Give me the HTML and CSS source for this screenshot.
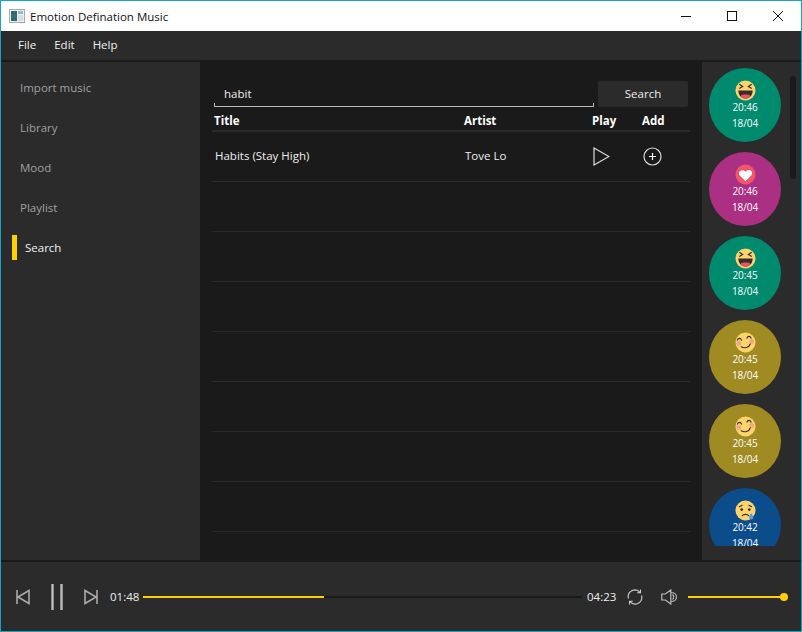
FILE: index.html
```html
<!DOCTYPE html>
<html>

	<head>
		<meta charset="utf-8" />
		<title>Emotion Defination Music</title>
		<link rel="stylesheet" href="styles.css">
	</head>

	<body>
		<svg class="defs" width="0" height="0">
			<symbol id="laugh" viewBox="0 0 22 22">
				<circle cx="11" cy="11" r="10.5" fill="#fbd56b" />
				<path d="M3.500 11h15c0 5-3.300 8.500-7.500 8.500S3.500 16 3.500 11z" fill="#3d2b2b" />
				<path d="M6 16.500c1.300-1.800 8.700-1.800 10 0-1.300 2-3 3-5 3s-3.700-1-5-3z" fill="#f2506a" />
				<path d="M4.500 4.500l3.500 2.300-3.500 2.200M17.500 4.500l-3.500 2.300 3.500 2.200" fill="none" stroke="#3d2b2b" stroke-width="1.300" />
			</symbol>
			<symbol id="love" viewBox="0 0 22 22">
				<circle cx="11" cy="11" r="10.500" fill="#f2546b" />
				<path d="M11 18l-6-6c-3-3.500 2.500-8 6-4 3.500-4 9-.5 6 4z" fill="#fff" />
			</symbol>
			<symbol id="smile" viewBox="0 0 22 22">
				<circle cx="11" cy="11" r="10.500" fill="#fbd56b" />
				<circle cx="4" cy="12" r="2.600" fill="#f2a58c" />
				<circle cx="17.500" cy="10" r="2.600" fill="#f2a58c" />
				<path d="M2.500 8.500c.8-2.500 3.500-2.500 4.300 0M12.500 6.500c.8-2.500 3.500-2.500 4.300 0M6.500 15.500c3.500 2 8 1 9.500-3" fill="none" stroke="#3d2b2b" stroke-width="1.200" stroke-linecap="round" />
			</symbol>
			<symbol id="sad" viewBox="0 0 22 22">
				<circle cx="11" cy="11" r="10.500" fill="#fbd56b" />
				<circle cx="7" cy="10" r="1.400" fill="#3d2b2b" />
				<circle cx="15" cy="10" r="1.400" fill="#3d2b2b" />
				<path d="M4.500 7l3-1.500M17.500 7l-3-1.500M7.500 16.500c1.500-2 5.500-2 7 0" fill="none" stroke="#3d2b2b" stroke-width="1.200" stroke-linecap="round" />
				<path d="M17 13.500c1.200 2 2.200 3.300 2.200 4.800a2.200 2.200 0 0 1-4.400 0c0-1.500 1-2.800 2.200-4.800z" fill="#5a9be8" />
			</symbol>
		</svg>

		<div class="window">
			<header class="titlebar">
				<svg class="appicon" width="16" height="14" viewBox="0 0 16 14">
					<rect x=".5" y=".5" width="15" height="13" fill="#eee" stroke="#aaa" />
					<rect x="2" y="2" width="6" height="10" fill="#2f6b73" />
					<rect x="9" y="2" width="5" height="3" fill="#9bb8c4" />
					<rect x="9" y="6" width="5" height="6" fill="#d8dde0" />
				</svg>
				<span class="apptitle">Emotion Defination Music</span>
				<div class="winbtns">
					<svg width="46" height="30" viewBox="0 0 46 30"><path d="M18 15.500h10" stroke="#111" /></svg>
					<svg width="46" height="30" viewBox="0 0 46 30"><rect x="18.500" y="10.500" width="9" height="9" fill="none" stroke="#111" /></svg>
					<svg width="46" height="30" viewBox="0 0 46 30"><path d="M18 10l10 10M28 10l-10 10" stroke="#111" /></svg>
				</div>
			</header>

			<nav class="menubar">
				<span>File</span>
				<span>Edit</span>
				<span>Help</span>
			</nav>

			<div class="content">
				<aside class="sidebar">
					<div class="navitem">Import music</div>
					<div class="navitem">Library</div>
					<div class="navitem">Mood</div>
					<div class="navitem">Playlist</div>
					<div class="navitem active">Search</div>
				</aside>

				<main class="main">
					<div class="searchrow">
						<div class="searchbox">habit</div>
						<div class="searchbtn">Search</div>
					</div>
					<div class="row head">
						<div class="c-title">Title</div>
						<div class="c-artist">Artist</div>
						<div class="c-play">Play</div>
						<div class="c-add">Add</div>
					</div>
					<div class="row song">
						<div class="c-title">Habits (Stay High)</div>
						<div class="c-artist">Tove Lo</div>
						<div class="c-play">
							<svg width="17" height="19" viewBox="0 0 17 19"><path d="M1 1v17l15-8.500z" fill="none" stroke="#ddd" stroke-width="1.200" /></svg>
						</div>
						<div class="c-add">
							<svg width="19" height="19" viewBox="0 0 19 19"><circle cx="9.500" cy="9.500" r="8.500" fill="none" stroke="#ddd" stroke-width="1.200" /><path d="M6 9.500h7M9.500 6v7" stroke="#fff" stroke-width="1.200" /></svg>
						</div>
					</div>
					<div class="row"></div>
					<div class="row"></div>
					<div class="row"></div>
					<div class="row"></div>
					<div class="row"></div>
					<div class="row"></div>
					<div class="row"></div>
				</main>

				<aside class="moods">
					<div class="mood green">
						<svg width="21" height="21"><use href="#laugh" /></svg>
						<span>20:46</span>
						<span>18/04</span>
					</div>
					<div class="mood pink">
						<svg width="21" height="21"><use href="#love" /></svg>
						<span>20:46</span>
						<span>18/04</span>
					</div>
					<div class="mood green">
						<svg width="21" height="21"><use href="#laugh" /></svg>
						<span>20:45</span>
						<span>18/04</span>
					</div>
					<div class="mood gold">
						<svg width="21" height="21"><use href="#smile" /></svg>
						<span>20:45</span>
						<span>18/04</span>
					</div>
					<div class="mood gold">
						<svg width="21" height="21"><use href="#smile" /></svg>
						<span>20:45</span>
						<span>18/04</span>
					</div>
					<div class="mood blue">
						<svg width="21" height="21"><use href="#sad" /></svg>
						<span>20:42</span>
						<span>18/04</span>
					</div>
					<div class="scrollthumb"></div>
				</aside>
			</div>

			<footer class="player">
				<svg class="ic-prev" width="14" height="16" viewBox="0 0 14 16"><path d="M1 1v14M13 1.500v13L2 8z" fill="none" stroke="#aaa" stroke-width="1.600" /></svg>
				<svg class="ic-pause" width="12" height="26" viewBox="0 0 12 26"><path d="M1.500 0v26M10.500 0v26" stroke="#bbb" stroke-width="2.400" /></svg>
				<svg class="ic-next" width="14" height="16" viewBox="0 0 14 16"><path d="M13 1v14M1 1.500v13L12 8z" fill="none" stroke="#aaa" stroke-width="1.600" /></svg>
				<span class="time t-now">01:48</span>
				<div class="track seek"><div class="fill" style="width: 41.2%"></div></div>
				<span class="time t-end">04:23</span>
				<svg class="ic-repeat" width="16" height="16" viewBox="0 0 16 16"><path d="M1.500 9.500A6.700 6.700 0 0 1 13 3.300M14.500 6.500A6.700 6.700 0 0 1 3 12.700M13.500 .5v3.300h-3.300M2.500 15.500v-3.300h3.300" fill="none" stroke="#ccc" stroke-width="1.100" /></svg>
				<svg class="ic-sound" width="17" height="16" viewBox="0 0 17 16"><path d="M.8 5v6h3.500l5.500 4V1L4.300 5zM9.800 3.500c3.500 0 5.700 2 5.700 4.500s-2.200 4.500-5.700 4.500M11.500 5.500c1.500 1.300 1.500 3.700 0 5" fill="none" stroke="#bbb" stroke-width="1.200" /></svg>
				<div class="track volume"><div class="fill full"><i class="thumb"></i></div></div>
			</footer>
		</div>
	</body>

</html>
```

FILE: styles.css
```css
* {
	box-sizing: border-box;
}

body {
	margin: 0;
	font-family: "Open Sans", "Noto Sans", sans-serif;
	font-size: 11.5px;
	color: #eee;
}

.defs {
	position: absolute;
}

.window {
	width: 802px;
	height: 632px;
	display: flex;
	flex-direction: column;
	border: 1px solid #17a3c7;
	background: #1a1a1a;
}

.titlebar {
	height: 30px;
	flex: none;
	display: flex;
	align-items: center;
	padding-left: 8px;
	background: #fff;
	color: #111;
}

.apptitle {
	margin-left: 5px;
}

.winbtns {
	margin-left: auto;
	display: flex;
}

.menubar {
	height: 29px;
	flex: none;
	display: flex;
	align-items: center;
	gap: 18px;
	padding: 0 0 3px 17px;
	background: #2b2b2b;
	color: #f0f0f0;
}

.content {
	flex: 1;
	min-height: 0;
	display: flex;
	margin: 2px 0;
}

.sidebar {
	width: 199px;
	flex: none;
	padding-top: 6px;
	background: #2b2b2b;
}

.navitem {
	height: 40px;
	display: flex;
	align-items: center;
	padding: 0 0 1px 19px;
	color: #a0a0a0;
}

.navitem.active {
	color: #f0f0f0;
	padding-left: 24px;
	position: relative;
}

.navitem.active::before {
	content: "";
	position: absolute;
	left: 11px;
	top: 7px;
	width: 5px;
	height: 25px;
	background: #ffd000;
}

.main {
	width: 502px;
	flex: none;
	overflow: hidden;
	padding: 19px 12px 0;
}

.searchrow {
	display: flex;
	height: 26px;
	padding-right: 2px;
	gap: 4px;
}

.searchbox {
	width: 380px;
	margin-left: 2px;
	padding-left: 9px;
	line-height: 25px;
	border: 1px solid #bbb;
	border-width: 0 1px 1px;
	border-image: linear-gradient(to bottom, transparent 22px, #bbb 22px) 1;
}

.searchbtn {
	width: 90px;
	text-align: center;
	line-height: 25px;
	background: #2b2b2b;
	border-radius: 2px;
}

.row {
	height: 50px;
	display: flex;
	align-items: center;
	border-bottom: 1px solid #2b2b2b;
}

.row.head {
	height: 25px;
	padding: 4px 0 0 2px;
	border-bottom-width: 2px;
	font-weight: 700;
	color: #fff;
}

.row.head .c-title {
	width: 250px;
}

.row.head .c-play {
	width: 50px;
	padding-left: 0;
}

.song {
	padding-bottom: 1px;
}

.song .c-title {
	width: 250px;
	padding: 0 0 1px 3px;
}

.c-title {
	flex: none;
}

.c-artist {
	width: 128px;
	flex: none;
}

.song .c-artist {
	padding: 0 0 1px 3px;
}

.c-play {
	width: 51px;
	flex: none;
	display: flex;
	padding-left: 3px;
}

.c-add {
	flex: none;
	display: flex;
}

.song .c-add {
	padding-left: 2px;
}

.moods {
	flex: 1;
	min-width: 0;
	position: relative;
	overflow: hidden;
	padding: 6px 0 14px 7px;
	background: #2b2b2b;
	display: flex;
	flex-direction: column;
	gap: 10px;
}

.mood {
	width: 72px;
	height: 74px;
	flex: none;
	border-radius: 50%;
	display: flex;
	flex-direction: column;
	align-items: center;
	padding-top: 12px;
	font-size: 10px;
	line-height: 16px;
	letter-spacing: -.1px;
	color: #fff;
}

.moods::after {
	content: "";
	position: absolute;
	left: 0;
	right: 0;
	bottom: 0;
	height: 14px;
	background: #2b2b2b;
}

.mood svg {
	margin-bottom: -2px;
}

.green {
	background: #008a6e;
}

.pink {
	background: #ab2f82;
}

.gold {
	background: #a08a22;
}

.blue {
	background: #0b4d8a;
}

.scrollthumb {
	position: absolute;
	left: 88px;
	top: 14px;
	width: 6px;
	height: 103px;
	border-radius: 3px;
	background: #1a1a1a;
}

.player {
	flex: none;
	height: 69px;
	display: flex;
	align-items: center;
	padding-left: 15px;
	background: #2b2b2b;
}

.ic-pause {
	margin-left: 21px;
}

.ic-next {
	margin-left: 21px;
}

.time {
	width: 28px;
	flex: none;
	color: #eee;
}

.t-now {
	margin-left: 12px;
}

.t-end {
	margin-left: 5px;
}

.track {
	height: 2px;
	background: #1a1a1a;
}

.seek {
	width: 439px;
	margin-left: 5px;
}

.fill {
	height: 100%;
	background: #ffd000;
	position: relative;
}

.fill.full {
	width: 100%;
}

.thumb {
	position: absolute;
	right: -4px;
	top: -3px;
	width: 8px;
	height: 8px;
	border-radius: 50%;
	background: #ffd000;
}

.ic-repeat {
	margin-left: 12px;
}

.ic-sound {
	margin-left: 18px;
}

.volume {
	width: 96px;
	margin-left: 10px;
}
```
